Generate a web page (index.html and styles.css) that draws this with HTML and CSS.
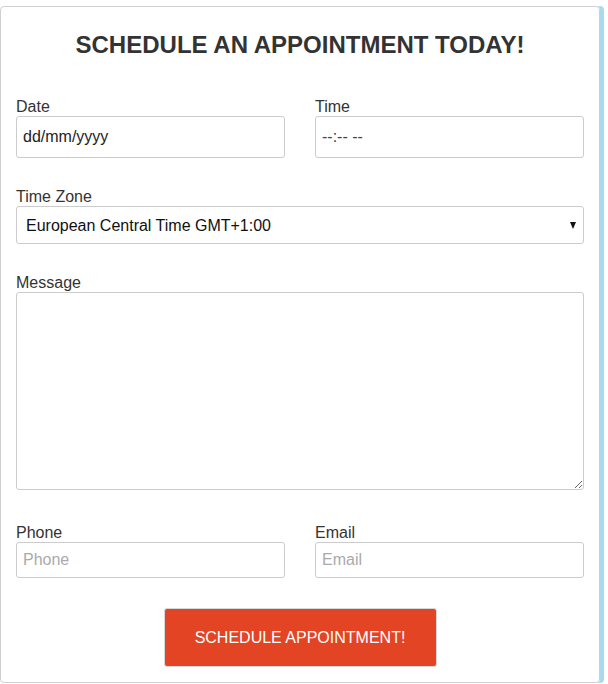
FILE: index.html
```html
<!DOCTYPE html>
<html lang="en">
<head>
<meta charset="utf-8">
<title>Schedule an appointment</title>
<link rel="stylesheet" href="styles.css">
</head>
<body>
<form class="card">
  <h1 class="title">SCHEDULE AN APPOINTMENT TODAY!</h1>
  <div class="row">
    <div class="field">
      <label class="label" for="date">Date</label>
      <input class="control control-tall" id="date" type="text" value="dd/mm/yyyy">
    </div>
    <div class="field">
      <label class="label" for="time">Time</label>
      <input class="control control-tall control-time" id="time" type="text" value="--:-- --">
    </div>
  </div>
  <div class="field">
    <label class="label" for="tz">Time Zone</label>
    <div class="select-wrap">
      <select class="control control-select" id="tz">
        <option>European Central Time GMT+1:00</option>
      </select>
    </div>
  </div>
  <div class="field">
    <label class="label" for="msg">Message</label>
    <textarea class="control control-area" id="msg"></textarea>
  </div>
  <div class="row row-contact">
    <div class="field">
      <label class="label" for="phone">Phone</label>
      <input class="control" id="phone" type="text" placeholder="Phone">
    </div>
    <div class="field">
      <label class="label" for="email">Email</label>
      <input class="control" id="email" type="text" placeholder="Email">
    </div>
  </div>
  <div class="actions">
    <button class="btn" type="button">SCHEDULE APPOINTMENT!</button>
  </div>
</form>
</body>
</html>
```
FILE: styles.css
```css
html, body {
  margin: 0;
  padding: 0;
  background: #fff;
}
body {
  padding-top: 6px;
  font-family: "Liberation Sans", Arial, sans-serif;
  color: #333;
}
.card {
  box-sizing: border-box;
  width: 600px;
  border: 1px solid #cfcfcf;
  border-radius: 4px;
  box-shadow: 4px 0 0 #a9d9ef;
  padding: 24px 15px 15px;
  display: flex;
  flex-direction: column;
  gap: 28px;
}
.title {
  margin: 0 0 9px;
  font-size: 24px;
  line-height: 28px;
  font-weight: bold;
  text-align: center;
  color: #333;
}
.row {
  display: grid;
  grid-template-columns: 1fr 1fr;
  column-gap: 30px;
}
.row-contact {
  margin-top: 4px;
}
.field {
  display: flex;
  flex-direction: column;
}
.label {
  font-size: 16px;
  line-height: 19px;
  padding-top: 1px;
  color: #333;
}
.control {
  box-sizing: border-box;
  width: 100%;
  height: 36px;
  margin: 0;
  border: 1px solid #ccc;
  border-radius: 3px;
  padding: 0 6px;
  font-family: "Liberation Sans", Arial, sans-serif;
  font-size: 16px;
  color: #222;
  background: #fff;
  outline: none;
}
.control::placeholder {
  color: #aaa;
}
.control-tall {
  height: 42px;
}
.control-time {
  color: #444;
}
.select-wrap {
  position: relative;
}
.select-wrap::after {
  content: "";
  position: absolute;
  right: 8px;
  top: 16px;
  border-left: 3.5px solid transparent;
  border-right: 3.5px solid transparent;
  border-top: 7px solid #111;
  pointer-events: none;
}
.control-select {
  height: 38px;
  padding: 0 9px;
  -webkit-appearance: none;
  appearance: none;
  color: #111;
}
.control-area {
  height: 198px;
  resize: vertical;
  padding: 6px;
}
.actions {
  display: flex;
  justify-content: center;
  padding-top: 2px;
}
.btn {
  width: 273px;
  height: 59px;
  border: 1px solid #d8d8d8;
  border-radius: 3px;
  background: #e34424;
  color: #fff;
  font-family: "Liberation Sans", Arial, sans-serif;
  font-size: 16px;
  cursor: pointer;
}
```
